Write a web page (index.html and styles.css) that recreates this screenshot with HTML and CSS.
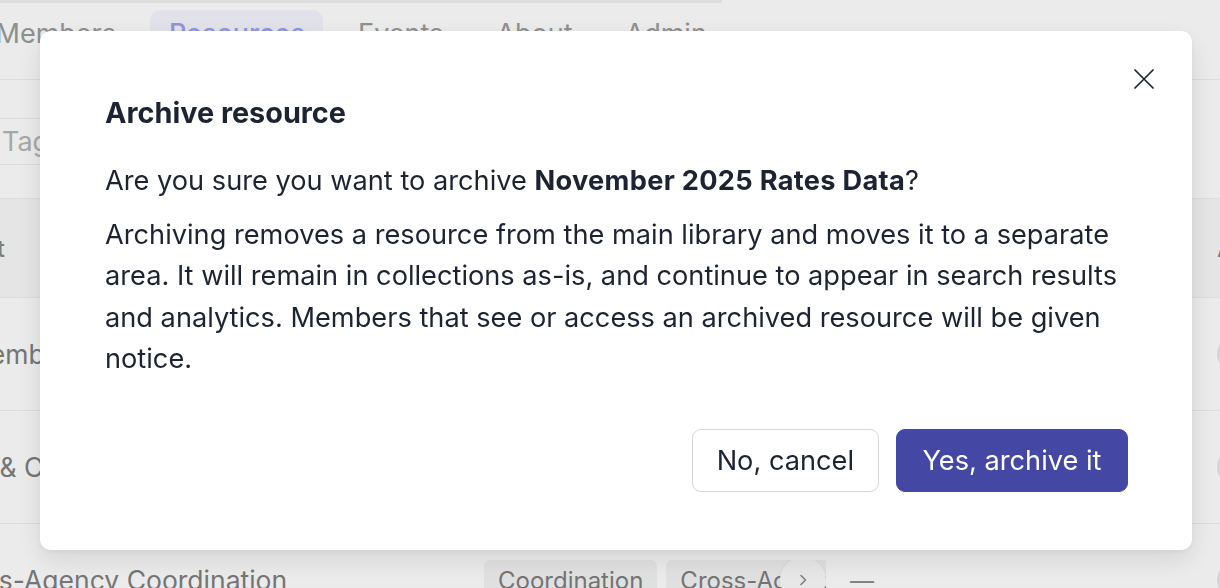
FILE: index.html
```html
<!DOCTYPE html>
<html lang="en">
<head>
<meta charset="utf-8">
<title>Archive resource</title>
<link rel="stylesheet" href="styles.css">
</head>
<body>
  <div class="page">
    <div class="topstrip"></div>
    <nav class="tabs">
      <span class="tab">Members</span>
      <span class="tab active">Resources</span>
      <span class="tab">Events</span>
      <span class="tab">About</span>
      <span class="tab">Admin</span>
    </nav>
    <div class="filters">
      <div class="tag-input">Tags</div>
    </div>
    <div class="table">
      <div class="row head">
        <span class="cell">Asset</span>
        <span class="cell">Tags</span>
        <span class="cell">Collections</span>
        <span class="cell">Actions</span>
      </div>
      <div class="row">
        <span class="cell">November 2025 Rates Data</span>
        <div class="tags"><span class="tag">Rates</span><span class="tag">Data</span></div>
        <span class="cell dash">—</span>
        <span class="avatar"></span>
      </div>
      <div class="row">
        <span class="cell">Risk &amp; Compliance</span>
        <div class="tags"><span class="tag">Compliance</span></div>
        <span class="cell dash">—</span>
        <span class="avatar"></span>
      </div>
      <div class="row">
        <span class="cell">Cross-Agency Coordination</span>
        <div class="tags">
          <span class="tag">Coordination</span><span class="tag">Cross-Agency</span>
          <button class="scroll-btn" aria-label="More tags">
            <svg width="16" height="16" viewBox="0 0 16 16"><path d="M6 3.5 10.5 8 6 12.5" fill="none" stroke="#8a8a8a" stroke-width="1.6" stroke-linecap="round" stroke-linejoin="round"/></svg>
          </button>
        </div>
        <span class="cell dash">—</span>
        <span class="avatar"></span>
      </div>
    </div>
  </div>

  <div class="overlay">
    <div class="modal" role="dialog" aria-labelledby="dlg-title">
      <button class="close" aria-label="Close">
        <svg width="20" height="20" viewBox="0 0 20 20"><path d="M1 1 19 19M19 1 1 19" fill="none" stroke="#1d2331" stroke-width="1.7" stroke-linecap="round"/></svg>
      </button>
      <h2 id="dlg-title" class="title">Archive resource</h2>
      <p class="confirm">Are you sure you want to archive <strong>November 2025 Rates Data</strong>?</p>
      <p class="details">Archiving removes a resource from the main library and moves it to a separate area. It will remain in collections as-is, and continue to appear in search results and analytics. Members that see or access an archived resource will be given notice.</p>
      <div class="actions">
        <button class="btn btn-cancel">No, cancel</button>
        <button class="btn btn-primary">Yes, archive it</button>
      </div>
    </div>
  </div>
</body>
</html>
```

FILE: styles.css
```css
* { box-sizing: border-box; }

html, body {
  margin: 0;
  padding: 0;
}

body {
  width: 1220px;
  height: 588px;
  overflow: hidden;
  background: #ffffff;
  font-family: Inter, "Noto Sans", "Liberation Sans", sans-serif;
  font-size: 27px;
  position: relative;
}

/* ---------- background page ---------- */
.page {
  width: 1220px;
}

.topstrip {
  width: 722px;
  height: 3px;
  background: #f1f1f1;
}

.tabs {
  display: flex;
  gap: 16px;
  margin-left: -23px;
  padding-top: 7px;
  height: 77px;
  border-bottom: 1px solid #efefef;
}

.tab {
  height: 47px;
  padding: 0 18.5px;
  display: flex;
  align-items: center;
  font-size: 27px;
  color: #9b9b9b;
  border-radius: 11px;
}

.tab.active {
  background: #f4f5fd;
  color: #9ba1f0;
  font-weight: 500;
}

.filters {
  padding: 38px 0 33px;
}

.tag-input {
  margin-left: -20px;
  width: 520px;
  height: 47px;
  border: 1px solid #efefef;
  border-radius: 8px;
  padding-left: 21px;
  display: flex;
  align-items: center;
  font-size: 27px;
  color: #b6b6b6;
}

.table {
  margin-left: -60px;
  width: 1313px;
}

.row {
  display: grid;
  grid-template-columns: 544px 366px 1fr 36px;
  align-items: center;
  height: 113px;
  border-bottom: 1px solid #efefef;
  font-size: 26.5px;
  color: #7f7f7f;
}

.row.head {
  height: 100px;
  background: #f9f9f9;
  border-top: 1px solid #efefef;
  color: #8a8a8a;
  font-size: 24px;
  font-weight: 500;
}

.cell {
  white-space: nowrap;
}

.dash {
  font-size: 24px;
  color: #8f8f8f;
}

.tags {
  position: relative;
  width: 342px;
  display: flex;
  gap: 9px;
  overflow: hidden;
}

.tag {
  flex-shrink: 0;
  height: 40px;
  padding: 0 14px;
  display: flex;
  align-items: center;
  background: #f4f4f4;
  border-radius: 6px;
  font-size: 24px;
  color: #7e7e7e;
  white-space: nowrap;
}

.scroll-btn {
  position: absolute;
  right: 0;
  top: -3px;
  width: 46px;
  height: 46px;
  border-radius: 50%;
  border: 0;
  padding: 0;
  background: #fbfbfb;
  box-shadow: 0 1px 4px rgba(0, 0, 0, 0.08);
  display: flex;
  align-items: center;
  justify-content: center;
}

.avatar {
  width: 36px;
  height: 36px;
  border-radius: 50%;
  background: #e7e7e7;
}

/* ---------- modal ---------- */
.overlay {
  position: fixed;
  inset: 0;
  background: rgba(0, 0, 0, 0.08);
  display: flex;
  align-items: flex-start;
  padding: 31px 0 0 40px;
}

.modal {
  position: relative;
  width: 1152px;
  background: #ffffff;
  border-radius: 11px;
  padding: 64px 64px 58px 65px;
  box-shadow: 0 10px 28px rgba(0, 0, 0, 0.10), 0 2px 6px rgba(0, 0, 0, 0.05);
  color: #1d2331;
}

.close {
  position: absolute;
  top: 30px;
  right: 30px;
  width: 36px;
  height: 36px;
  padding: 0;
  border: 0;
  background: none;
  display: flex;
  align-items: center;
  justify-content: center;
}

.title {
  margin: 0;
  font-size: 28.8px;
  font-weight: 700;
  line-height: 36px;
}

.confirm {
  margin: 28.5px 0 0;
  font-size: 27.2px;
  line-height: 41.5px;
}

.confirm strong {
  font-weight: 700;
  letter-spacing: 0.3px;
}

.details {
  margin: 12.5px 0 0;
  font-size: 27.2px;
  line-height: 41.5px;
}

.actions {
  display: flex;
  justify-content: flex-end;
  gap: 17px;
  margin-top: 49.5px;
}

.btn {
  height: 63px;
  font-family: inherit;
  font-size: 27.2px;
  border-radius: 9px;
  cursor: pointer;
}

.btn-cancel {
  padding: 0 24px;
  background: #ffffff;
  border: 1.5px solid #d7d7d7;
  color: #1d2331;
}

.btn-primary {
  padding: 0 25.5px;
  background: #4547a5;
  border: 1.5px solid #4547a5;
  color: #ffffff;
}
```
